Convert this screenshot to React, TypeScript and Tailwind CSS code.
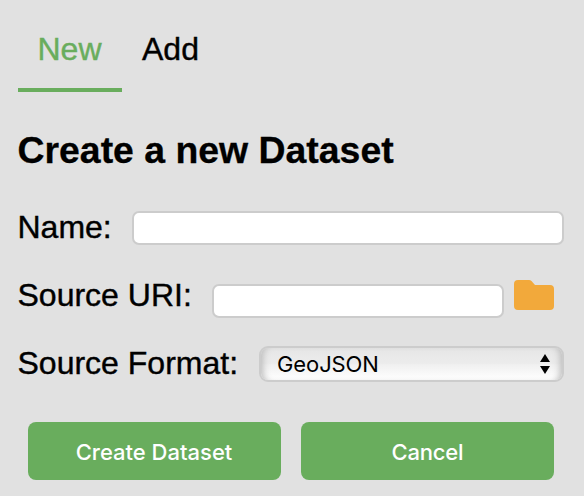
export default function App() {
  return (
    <main className="h-[496px] w-[584px] overflow-hidden bg-[#e1e1e1] px-[18px] font-['Liberation_Sans',Arial,sans-serif] text-[32px] leading-[36px] text-black">
      <nav className="flex h-[92px] [-webkit-text-stroke:0.4px_currentColor]">
        <button className="h-[92px] w-[104px] border-b-4 border-[#69ad5d] pb-[35px] pr-[1px] pt-[31px] leading-[36px] text-[#69ad5d]">New</button>
        <button className="ml-5 h-[92px] pb-[39px] pt-[31px] leading-[36px]">Add</button>
      </nav>
      <h1 className="-ml-[0.5px] mt-[36px] whitespace-nowrap text-[37.4px] font-bold leading-[44px] [-webkit-text-stroke:0.3px_currentColor]">Create a new Dataset</h1>
      <form>
        <div className="mt-[37px] flex h-9 w-[546px] items-center">
          <label className="-ml-[0.5px] w-[114.5px] whitespace-nowrap [-webkit-text-stroke:0.4px_currentColor]">Name:</label>
          <input className="mt-[2px] h-[34px] min-w-0 flex-1 rounded-[7px] border-2 border-[#cccccc] bg-white" />
        </div>
        <div className="mt-8 flex h-9 w-[546px]">
          <label className="-ml-[0.5px] w-[194.5px] whitespace-nowrap [-webkit-text-stroke:0.4px_currentColor]">Source URI:</label>
          <input className="mt-[7px] h-[34px] w-[292px] rounded-[7px] border-2 border-[#cccccc] bg-white" />
          <svg className="ml-[10px] mt-[3px] h-[30px] w-10" viewBox="0 0 40 30"><path fill="#f2a93b" d="M4 0H15Q16.5 0 17.5 1L21 5H36Q40 5 40 9V26Q40 30 36 30H4Q0 30 0 26V4Q0 0 4 0Z" /></svg>
        </div>
        <div className="mt-8 flex h-9 w-[546px]">
          <label className="-ml-[0.5px] w-[241.5px] whitespace-nowrap [-webkit-text-stroke:0.4px_currentColor]">Source Format:</label>
          <button type="button" className="mt-[1px] flex h-9 w-[305px] items-center justify-between rounded-[9px] border-2 border-[#cccccc] bg-[linear-gradient(to_bottom,#e6e6e6_0%,#ececec_48%,#f0f0f0_52%,#ffffff_100%)] pl-4 pr-3 font-[Inter] text-[22px] shadow-[inset_7px_0_7px_-5px_#bbbbbb,inset_-7px_0_7px_-5px_#bbbbbb]">
            <span className="-tracking-[0.1px]">GeoJSON</span>
            <svg className="h-5 w-[10px]" viewBox="0 0 10 20"><path d="M5 0L10 8H0ZM0 12H10L5 20Z" /></svg>
          </button>
        </div>
        <div className="ml-[10px] mt-[41px] flex gap-5 font-[Inter] text-[22px] font-medium text-white">
          <button type="button" className="h-[58px] w-[253px] rounded-[8px] bg-[#69ad5d] pr-[1px] pt-[2px]">Create Dataset</button>
          <button type="button" className="h-[58px] w-[253px] rounded-[8px] bg-[#69ad5d] pt-[2px] -tracking-[0.2px]">Cancel</button>
        </div>
      </form>
    </main>
  );
}
